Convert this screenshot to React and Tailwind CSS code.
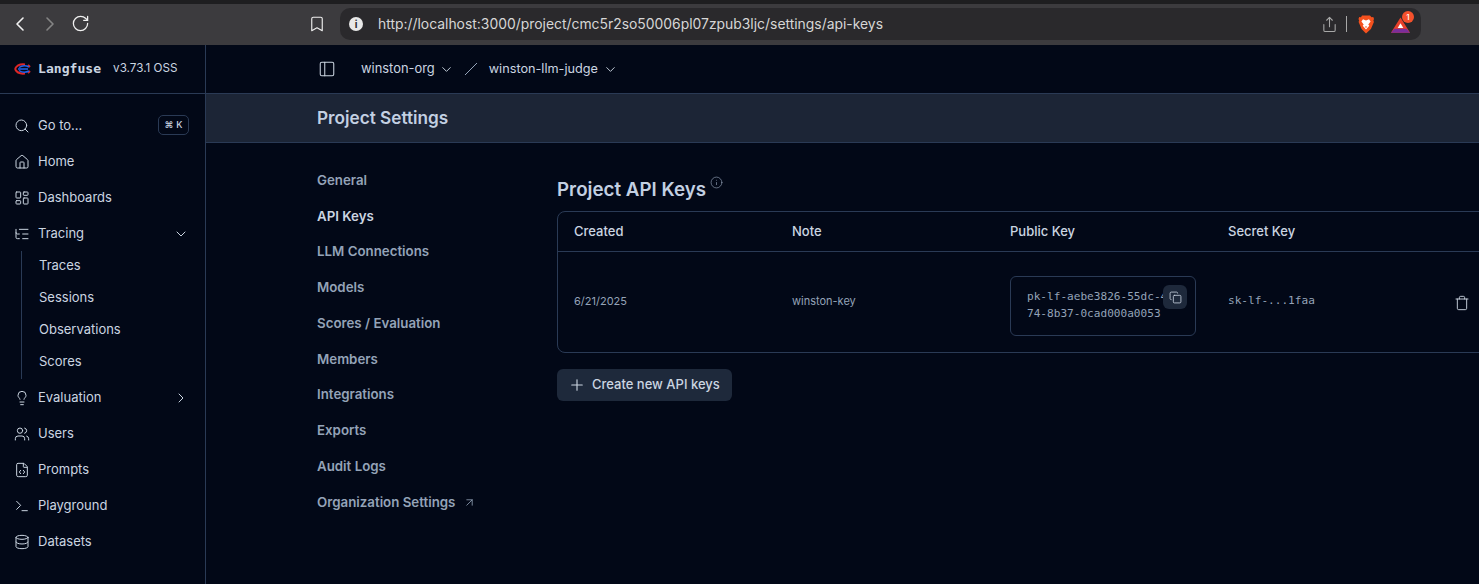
import React from "react";
import { Search, Home, LayoutDashboard, ListTree, Lightbulb, Users, FileCode, Terminal, Database, ChevronDown, ChevronRight, ChevronLeft, PanelLeft, Copy, Trash, Plus, Info, ArrowUpRight, Bookmark, RotateCw, Share } from "lucide-react";

const inter = "font-['Inter',sans-serif]";

function SideItem({ icon: Icon, label, chevron }) {
  return (
    <div className="flex h-9 items-center pl-[14px] pr-[16px] text-[13px] text-[#cbd5e1]">
      <Icon size={16} strokeWidth={1.5} className="mr-[8px] shrink-0" />
      <span className="flex-1">{label}</span>
      {chevron === "down" && <ChevronDown size={16} strokeWidth={1.5} />}
      {chevron === "right" && <ChevronRight size={16} strokeWidth={1.5} />}
    </div>
  );
}

function Langfuse() {
  return (
    <svg width="17" height="12" viewBox="0 0 17 12" fill="none" className="mr-[7px]">
      <path d="M1 6 C3 2 7 1 11 1.500 M1 6 C3 10 7 11 11 10.500 M14 2l2 2M14 10l2-2" stroke="#dc2626" strokeWidth="2" />
      <path d="M5 4.500C8 2.500 12 2.500 15 4M5 7.500C8 9.500 12 9.500 15 8M4 6h10" stroke="#2563eb" strokeWidth="1.500" />
    </svg>
  );
}

function Brave() {
  return (
    <svg width="16" height="19" viewBox="0 0 16 19">
      <path d="M4 .5h8l1.5 1.7 1.8-.3.7 2-.6 1.6.5 1.6-3 7L8 18.5 3.6 14l-3-7 .5-1.6L.5 3.9l.7-2 1.8.3z" fill="#f4511e" />
      <path d="M8 5.5 5 4.2 3.4 6.4l2.3 3-1 1.4L8 14.500l3.300-3.700-1-1.400 2.300-3L11 4.200z" fill="#fff" />
      <path d="M6.800 11.500h2.400L8 13z" fill="#f4511e" />
    </svg>
  );
}

function Rewards() {
  return (
    <div className="relative h-[20px] w-[26px]">
      <svg width="19" height="17" viewBox="0 0 20 17" className="absolute left-0 top-[3px]">
        <path d="M10 0 20 16H0z" fill="#e8402a" />
        <path d="M0 16l3.500-4h13l3.500 4z" fill="#7b2d9b" />
        <path d="M10 6l3 5H7z" fill="#fff" />
      </svg>
      <div className="absolute left-[11px] top-[-3px] flex h-[12px] w-[12px] items-center justify-center rounded-full bg-[#f4512c] font-['Inter',sans-serif] text-[8px] font-medium text-white">1</div>
    </div>
  );
}

const settings = ["General", "API Keys", "LLM Connections", "Models", "Scores / Evaluation", "Members", "Integrations", "Exports", "Audit Logs"];

export default function App() {
  return (
    <div className={`flex h-[584px] w-[1479px] flex-col overflow-hidden bg-[#020817] ${inter}`}>
      {/* browser chrome */}
      <div className="h-[4px] bg-[#1e1e20]" />
      <div className="flex h-[41px] items-start bg-[#3c3b3e] pt-[4px] text-[#f1f1f1]">
        <ChevronLeft size={24} strokeWidth={1.6} className="ml-[8px] mt-[4px]" />
        <ChevronRight size={24} strokeWidth={1.6} className="ml-[6px] mt-[4px] text-[#858585]" />
        <RotateCw size={19} strokeWidth={1.6} className="ml-[9px] mt-[6px]" />
        <Bookmark size={18} strokeWidth={1.5} className="ml-[218px] mt-[7px]" />
        <div className="ml-[14px] flex h-[32px] w-[1081px] items-center rounded-[10px] bg-[#2a292c] pl-[9px] pr-[4px]">
          <div className="flex h-[14px] w-[14px] items-center justify-center rounded-full bg-[#e8e8e8] text-[10px] font-bold leading-none text-[#2a292c]">i</div>
          <span className="ml-[15px] flex-1 text-[13.900px] text-[#d6d6d6]">http://localhost:3000/project/cmc5r2so50006pl07zpub3ljc/settings/api-keys</span>
          <Share size={17} strokeWidth={1.5} className="text-[#a8a8a8]" />
          <div className="ml-[8px] mr-[11px] h-[16px] w-px bg-[#a8a8a8]" />
          <Brave />
          <div className="ml-[17px]"><Rewards /></div>
        </div>
      </div>

      <div className="flex min-h-0 flex-1">
        {/* sidebar */}
        <aside className="w-[206px] shrink-0 border-r border-[#2a3a55]">
          <div className="flex h-[49px] items-center border-b border-[#2a3a55] pl-[14px]">
            <Langfuse />
            <span className="font-['DejaVu_Sans_Mono',monospace] text-[13.100px] font-bold text-[#cbd5e1]">Langfuse</span>
            <span className="ml-[12px] text-[11.700px] text-[#cbd5e1]">v3.73.1 OSS</span>
          </div>
          <div className="pt-[14px]">
            <div className="relative">
              <SideItem icon={Search} label="Go to..." />
              <div className="absolute right-[16px] top-[7px] flex h-[20px] w-[31px] items-center justify-center gap-[3px] rounded-[5px] border border-[#2a3a55] text-[9px] font-medium text-[#cbd5e1]"><span>⌘</span><span>K</span></div>
            </div>
            <SideItem icon={Home} label="Home" />
            <SideItem icon={LayoutDashboard} label="Dashboards" />
            <SideItem icon={ListTree} label="Tracing" chevron="down" />
            <div className="mb-[1px] ml-[21px] mt-[-1px] border-l border-[#2a3a55] pl-[17px] text-[13px] text-[#cbd5e1]">
              <div className="flex h-8 items-center pb-[2px]">Traces</div>
              <div className="flex h-8 items-center pb-[2px]">Sessions</div>
              <div className="flex h-8 items-center pb-[2px]">Observations</div>
              <div className="flex h-8 items-center pb-[2px]">Scores</div>
            </div>
            <SideItem icon={Lightbulb} label="Evaluation" chevron="right" />
            <SideItem icon={Users} label="Users" />
            <SideItem icon={FileCode} label="Prompts" />
            <SideItem icon={Terminal} label="Playground" />
            <SideItem icon={Database} label="Datasets" />
          </div>
        </aside>

        {/* main */}
        <main className="min-w-0 flex-1">
          <div className="flex h-[48px] items-center pl-[112px] text-[12.900px] text-[#cbd5e1]">
            <PanelLeft size={18} strokeWidth={1.4} />
            <span className="ml-[25px]">winston-org</span>
            <ChevronDown size={15} strokeWidth={1.5} className="ml-[4px]" />
            <svg width="14" height="14" viewBox="0 0 14 14" className="ml-[10px]" fill="none" stroke="#94a3b8"><path d="M1 13 13 1" /></svg>
            <span className="ml-[11px] text-[12.700px]">winston-llm-judge</span>
            <ChevronDown size={15} strokeWidth={1.5} className="ml-[5px]" />
          </div>
          <div className="flex h-[50px] items-center border-y border-[#2a3a55] bg-[#1c2536] pl-[111px] text-[17.200px] font-semibold text-[#c3d0e2]">Project Settings</div>

          <div className="flex pl-[111px]">
            <nav className="w-[240px] shrink-0 pt-[20px] text-[13.300px] font-semibold text-[#94a3b8]">
              {settings.map((label) => (
                <div key={label} className={`flex h-[35.750px] items-center ${label === "API Keys" ? "text-[#cbd5e1]" : ""}`}>{label}</div>
              ))}
              <div className="flex h-[35.750px] items-center">
                Organization Settings
                <ArrowUpRight size={13} strokeWidth={1.5} className="ml-[8px]" />
              </div>
            </nav>

            <section className="w-[1000px] shrink-0">
              <div className="flex h-[68px] items-start pt-[34px]">
                <h2 className="text-[18.750px] font-semibold leading-[26px] text-[#c3d0e2]">Project API Keys</h2>
                <Info size={13} strokeWidth={1.2} className="ml-[4px] mt-[-1px] text-[#94a3b8]" />
              </div>
              <div className="h-[142px] rounded-[8px] border border-[#2a3a55]">
                <div className="flex h-[40px] items-center border-b border-[#2a3a55] text-[13px] font-medium text-[#cbd5e1]">
                  <div className="w-[218px] pl-[16px]">Created</div>
                  <div className="w-[218px] pl-[16px]">Note</div>
                  <div className="w-[218px] pl-[16px]">Public Key</div>
                  <div className="w-[218px] pl-[16px]">Secret Key</div>
                </div>
                <div className="flex h-[100px] items-center pb-[2px] text-[11px] text-[#94a3b8]">
                  <div className="w-[218px] pl-[16px]">6/21/2025</div>
                  <div className="w-[218px] pl-[16px]">winston-key</div>
                  <div className="w-[218px] pl-[16px]">
                    <div className="relative mt-[10px] h-[60px] w-[186px] overflow-hidden whitespace-nowrap rounded-[6px] border border-[#2a3a55] pl-[16px] pt-[11px] font-['DejaVu_Sans_Mono',monospace] text-[11.100px] leading-[17px] text-[#94a3b8]">
                      <div>pk-lf-aebe3826-55dc-4</div>
                      <div>74-8b37-0cad000a0053</div>
                      <div className="absolute right-[8px] top-[8px] flex h-[24px] w-[24px] items-center justify-center rounded-[6px] bg-[#1e293b] text-[#cbd5e1]"><Copy size={13} strokeWidth={1.5} /></div>
                    </div>
                  </div>
                  <div className="w-[218px] pl-[16px] font-['DejaVu_Sans_Mono',monospace] text-[11.100px]">sk-lf-...1faa</div>
                  <Trash size={16} strokeWidth={1.4} className="ml-[24px] mt-[3px] text-[#cbd5e1]" />
                </div>
              </div>
              <button className="mt-[16px] flex h-[32px] w-[175px] items-center rounded-[6px] bg-[#1e293b] pl-[11px] text-[13px] font-medium text-[#cbd5e1]">
                <Plus size={18} strokeWidth={1.5} className="mr-[6px]" />
                Create new API keys
              </button>
            </section>
          </div>
        </main>
      </div>
    </div>
  );
}
